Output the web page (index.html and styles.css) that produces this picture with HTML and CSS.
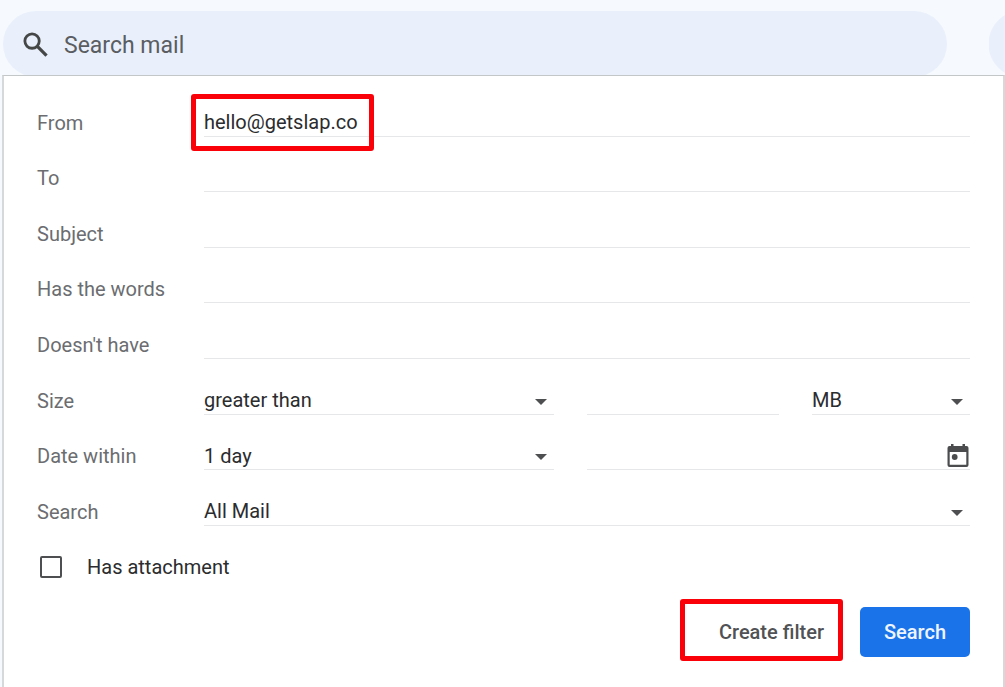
FILE: index.html
```html
<!DOCTYPE html>
<html lang="en">
<head>
<meta charset="utf-8">
<title>Search mail</title>
<link rel="stylesheet" href="styles.css">
</head>
<body>
<header class="topbar">
  <label class="searchbar">
    <svg class="search-icon" viewBox="0 0 24 24" aria-hidden="true"><circle cx="8.7" cy="8.7" r="6.9" fill="none" stroke="currentColor" stroke-width="2.7"/><path d="M13.8 13.8 22.6 22.6" fill="none" stroke="currentColor" stroke-width="3.1"/></svg>
    <input class="search-input" type="search" placeholder="Search mail" aria-label="Search mail">
  </label>
  <div class="next-pill"></div>
</header>
<form class="panel">
  <div class="fields">
    <div class="row"><label class="label" for="from">From</label><div class="controls"><div class="control wide marked marked-from"><input class="field" id="from" type="text" value="hello@getslap.co"></div></div></div>
    <div class="row"><label class="label" for="to">To</label><div class="controls"><input class="field wide" id="to" type="text"></div></div>
    <div class="row"><label class="label" for="subject">Subject</label><div class="controls"><input class="field wide" id="subject" type="text"></div></div>
    <div class="row"><label class="label" for="has">Has the words</label><div class="controls"><input class="field wide" id="has" type="text"></div></div>
    <div class="row"><label class="label" for="hasnot">Doesn't have</label><div class="controls"><input class="field wide" id="hasnot" type="text"></div></div>
    <div class="row"><label class="label" for="size">Size</label>
      <div class="controls">
        <div class="control select"><select class="field" id="size"><option>greater than</option><option>less than</option></select></div>
        <input class="field" type="text" aria-label="Size value">
        <div class="control select"><select class="field" aria-label="Size unit"><option>MB</option><option>KB</option><option>Bytes</option></select></div>
      </div>
    </div>
    <div class="row"><label class="label" for="within">Date within</label>
      <div class="controls">
        <div class="control select"><select class="field" id="within"><option>1 day</option><option>3 days</option><option>1 week</option></select></div>
        <div class="control date">
          <input class="field" type="text" aria-label="Date">
          <button class="calendar" type="button" aria-label="Choose date"><svg viewBox="0 0 22 24" aria-hidden="true"><path fill="currentColor" fill-rule="evenodd" d="M4 0h2.5v2h9V0H18v2h1.5A2 2 0 0 1 21.500 4v17a2 2 0 0 1-2 2h-17a2 2 0 0 1-2-2V4a2 2 0 0 1 2-2H4zM2.700 8v12.800h16.600V8z"/><circle cx="7.700" cy="13" r="2.900" fill="currentColor"/></svg></button>
        </div>
      </div>
    </div>
    <div class="row"><label class="label" for="scope">Search</label><div class="controls"><div class="control select wide"><select class="field" id="scope"><option>All Mail</option><option>Inbox</option></select></div></div></div>
    <div class="row"><label class="check"><input class="box" type="checkbox">Has attachment</label></div>
  </div>
  <div class="actions">
    <button class="button create marked marked-create" type="button">Create filter</button>
    <button class="button primary" type="submit">Search</button>
  </div>
</form>
</body>
</html>
```

FILE: styles.css
```css
*, *::before, *::after { box-sizing: border-box; }

body {
  margin: 0;
  min-height: 100vh;
  display: flex;
  flex-direction: column;
  background: #f6f9fd;
  color: #2b2c2e;
  font: 20px/24px Roboto, "Liberation Sans", sans-serif;
}

input, select, button { font: inherit; color: inherit; }

.topbar {
  display: flex;
  gap: 42px;
  padding: 11px 0 0 3px;
}

.searchbar {
  flex: 1;
  height: 66px;
  margin-bottom: -2px;
  padding: 0 20px;
  display: flex;
  align-items: center;
  gap: 16px;
  border-radius: 33px;
  background: #e9f0fb;
}

.search-icon { width: 25px; height: 25px; color: #444746; }

.search-input {
  flex: 1;
  min-width: 0;
  height: 32px;
  padding: 2px 0 0;
  border: 0;
  outline: 0;
  background: transparent;
  font-size: 23px;
}

.search-input::placeholder { color: #5a5d61; opacity: 1; }

.next-pill {
  width: 16px;
  height: 66px;
  margin-bottom: -2px;
  background: radial-gradient(circle at 33px 33px, #e9f0fb 33px, transparent 34px);
}

.panel {
  position: relative;
  flex: 1;
  display: flex;
  flex-direction: column;
  margin-left: 2px;
  padding: 19px 33px 30px 33px;
  border: solid #d6d9da;
  border-width: 1px 2px 0;
  border-top-color: #c4c7c8;
  background: #fff;
}

.fields {
  flex: 1;
  display: grid;
  grid-auto-rows: 1fr;
}

.row { display: flex; align-items: center; }

.label { width: 167px; flex: none; color: #6b6d70; }

.controls {
  flex: 1;
  display: grid;
  grid-template-columns: 350fr 192fr 158fr;
  column-gap: 33px;
}

.wide { grid-column: 1 / -1; }
.date { grid-column: 2 / -1; }
.control { position: relative; min-width: 0; }

.field {
  display: block;
  width: 100%;
  min-width: 0;
  height: 28px;
  padding: 0;
  border: 0;
  border-bottom: 1px solid #e6e7e8;
  border-radius: 0;
  outline: 0;
  background: transparent;
  appearance: none;
}

.select::after {
  content: "";
  position: absolute;
  right: 7px;
  top: 12px;
  border: 6px solid transparent;
  border-top-color: #4d4f51;
  border-bottom: 0;
  pointer-events: none;
}

.calendar {
  position: absolute;
  right: 1px;
  top: 2px;
  width: 22px;
  height: 24px;
  padding: 0;
  border: 0;
  background: transparent;
  color: #4a4c4e;
}

.calendar svg { display: block; }

.check {
  display: flex;
  align-items: center;
  gap: 25px;
  padding-left: 3px;
}

.box {
  appearance: none;
  width: 22px;
  height: 22px;
  margin: 0;
  border: 2px solid #4d4f51;
  border-radius: 2px;
}

.actions {
  display: flex;
  justify-content: flex-end;
  gap: 18px;
  padding-top: 12px;
}

.button {
  height: 50px;
  padding: 0 24px;
  border: 0;
  border-radius: 5px;
  background: transparent;
  font-weight: 500;
}

.create { padding: 0 18px 0 32px; color: #505255; }
.primary { background: #1a73e8; color: #eef5ff; }

/* red callout frames drawn over the controls */
.marked { position: relative; }

.marked::before {
  content: "";
  position: absolute;
  border: 5px solid #fa0008;
  border-radius: 3px;
  pointer-events: none;
}

.marked-from::before { left: -13px; top: -15px; width: 183px; height: 57px; }
.marked-create::before { inset: -8px -1px -4px -7px; }
```
